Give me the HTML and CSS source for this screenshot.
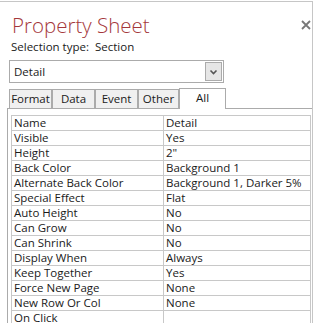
FILE: index.html
```html
<!DOCTYPE HTML>
<html lang="en-gb">
<head>
    <meta charset="utf-8" />
    <title>Property Sheet</title>
    <link rel="stylesheet" href="styles.css">
</head>
<body>
    <div class="sheet">
        <div class="header">
            <h1 class="title">Property Sheet</h1>
            <span class="close">
                <svg width="10" height="10" viewBox="0 0 10 10">
                    <path d="M1 1 L9 9 M9 1 L1 9" stroke="#777" stroke-width="1.8" fill="none" />
                </svg>
            </span>
        </div>
        <div class="selection">Selection type:&nbsp;&nbsp;Section</div>
        <div class="combo">
            <span class="combo-text">Detail</span>
            <span class="combo-btn">
                <svg width="9" height="6" viewBox="0 0 9 6">
                    <path d="M1.5 1.5 L4.5 4.5 L7.5 1.5" stroke="#555" stroke-width="1.6" fill="none" />
                </svg>
            </span>
        </div>
        <div class="tabs">
            <div class="tab">Format</div>
            <div class="tab">Data</div>
            <div class="tab">Event</div>
            <div class="tab">Other</div>
            <div class="tab active">All</div>
        </div>
        <div class="panel">
            <table class="props">
                <tr><td>Name</td><td>Detail</td></tr>
                <tr><td>Visible</td><td>Yes</td></tr>
                <tr><td>Height</td><td>2"</td></tr>
                <tr><td>Back Color</td><td>Background 1</td></tr>
                <tr><td>Alternate Back Color</td><td>Background 1, Darker 5%</td></tr>
                <tr><td>Special Effect</td><td>Flat</td></tr>
                <tr><td>Auto Height</td><td>No</td></tr>
                <tr><td>Can Grow</td><td>No</td></tr>
                <tr><td>Can Shrink</td><td>No</td></tr>
                <tr><td>Display When</td><td>Always</td></tr>
                <tr><td>Keep Together</td><td>Yes</td></tr>
                <tr><td>Force New Page</td><td>None</td></tr>
                <tr><td>New Row Or Col</td><td>None</td></tr>
                <tr><td>On Click</td><td></td></tr>
            </table>
        </div>
    </div>
</body>
</html>
```

FILE: styles.css
```css
html, body {
    margin: 0;
    padding: 0;
    background: #fff;
    overflow: hidden;
}

body {
    font-family: "Open Sans", "Noto Sans", sans-serif;
    font-size: 11.5px;
    color: #1a1a1a;
}

.sheet {
    width: 312px;
    height: 322px;
    margin-top: 1px;
    border-top: 1px solid #c6c6c6;
    border-right: 1px solid #c6c6c6;
}

.header {
    display: flex;
    justify-content: space-between;
    align-items: flex-start;
    height: 37px;
}

.title {
    margin: 8px 0 0 12px;
    font-size: 20.5px;
    font-weight: 300;
    line-height: 30px;
    color: #a4373a;
}

.close {
    margin: 18px 1px 0 0;
    width: 10px;
    height: 10px;
}

.close svg {
    display: block;
}

.selection {
    margin-left: 11px;
    line-height: 16px;
    height: 21px;
}

.combo {
    display: flex;
    align-items: center;
    justify-content: space-between;
    box-sizing: border-box;
    width: 215px;
    height: 23px;
    margin-left: 9px;
    border: 1px solid #ababab;
    padding: 0 1px 0 4px;
}

.combo-btn {
    display: flex;
    align-items: center;
    justify-content: center;
    box-sizing: border-box;
    width: 17px;
    height: 19px;
    border: 1px solid #ababab;
    background: #e6e6e6;
}

.tabs {
    display: flex;
    align-items: flex-end;
    margin: 4px 0 0 9px;
    height: 21px;
}

.tab {
    box-sizing: border-box;
    width: 43px;
    height: 19px;
    line-height: 17px;
    text-align: center;
    border: 1px solid #ababab;
    border-bottom: none;
    background: #f0f0f0;
}

.tab:nth-child(4) {
    width: 41px;
}

.tab.active {
    width: 47px;
    height: 21px;
    background: #fff;
    line-height: 17px;
    position: relative;
    top: 1px;
    margin-top: -1px;
}

.panel {
    margin-left: 7px;
    height: 214px;
    border-top: 1px solid #ababab;
    border-left: 1px solid #ababab;
    border-bottom: 1px solid #ababab;
    padding: 6px 1px 0 3px;
}

.props {
    width: 300px;
    border-collapse: collapse;
    table-layout: fixed;
}

.props td {
    height: 14px;
    padding: 0 2px;
    line-height: 14px;
    border: 1px solid #c8c8c8;
    white-space: nowrap;
    overflow: hidden;
}

.props td:first-child {
    width: 147px;
}
```
